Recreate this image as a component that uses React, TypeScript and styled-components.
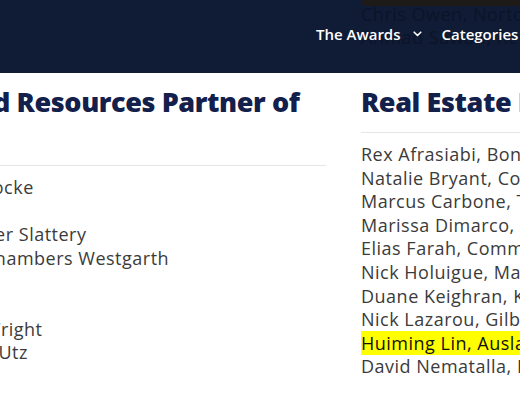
import styled, { createGlobalStyle } from 'styled-components'

const GlobalStyle = createGlobalStyle`
  html, body {
    margin: 0;
    padding: 0;
    background: #fff;
    overflow: hidden;
  }
  body {
    font-family: 'Open Sans', 'Noto Sans', sans-serif;
    width: 520px;
    height: 400px;
  }
`

const left = {
  title: 'Talent and Resources Partner of the Year',
  names: [
    'Emily Harris, Locke',
    'Jo Grant, Hays',
    'Anna Lins, Baker Slattery',
    'Emma Rudd, Chambers Westgarth',
    'Tim Ng, Aspect',
    'Lisa Tan, Hays',
    'Bobby Lowe, Wright',
    'Charlotte Hall, Utz',
    'Kim Ho, Apex',
  ],
}

const right = {
  title: 'Real Estate Lawyer of the Year',
  names: [
    'Rex Afrasiabi, Bond Lawyers',
    'Natalie Bryant, Corrs Chambers',
    'Marcus Carbone, Thomson Geer',
    'Marissa Dimarco, Maddocks',
    'Elias Farah, Commercial Law Group',
    'Nick Holuigue, Maddocks',
    'Duane Keighran, Keypoint Law',
    'Nick Lazarou, Gilbert + Tobin',
    'Huiming Lin, Auslaw Partners',
    'David Nematalla, Hall & Wilcox',
  ],
  highlight: 'Huiming Lin, Auslaw Partners',
}

const Chevron = () => (
  <svg width="9" height="6" viewBox="0 0 9 6" fill="none">
    <path d="M1.2 1.2 4.5 4.5 7.8 1.2" stroke="#fff" strokeWidth="1.6" strokeLinecap="round" strokeLinejoin="round" />
  </svg>
)

const App = () => {
  return (
    <>
      <GlobalStyle />
      <Header>
        <Ghost>
          <GhostBar />
          <GhostLine>Chris Owen, Norton Rose Fulbright</GhostLine>
          <GhostLine>Ahmad Sawan, Ready Lawyers</GhostLine>
        </Ghost>
        <Nav>
          <NavItem>
            The Awards
            <Chevron />
          </NavItem>
          <NavItem>
            Categories
            <Chevron />
          </NavItem>
          <NavItem>Judges</NavItem>
        </Nav>
      </Header>
      <Columns>
        {[left, right].map((col) => (
          <Column key={col.title}>
            <Title>{col.title}</Title>
            <Divider />
            <List>
              {col.names.map((n) =>
                'highlight' in col && col.highlight === n ? (
                  <Row key={n}>
                    <Mark>{n}</Mark>
                  </Row>
                ) : (
                  <Row key={n}>{n}</Row>
                )
              )}
            </List>
          </Column>
        ))}
      </Columns>
    </>
  )
}

export default App

const Header = styled.header`
  position: relative;
  height: 73px;
  background: #101b36;
  display: flex;
  align-items: center;
  padding-left: 316px;
  overflow: hidden;
`

const Ghost = styled.div`
  position: absolute;
  left: 361px;
  top: 0;
  width: 400px;
`

const GhostBar = styled.div`
  height: 6px;
  background: #1d1a17;
  border-bottom-left-radius: 6px;
  margin-bottom: -3px;
`

const GhostLine = styled.div`
  font-size: 18px;
  line-height: 23px;
  letter-spacing: 0.5px;
  color: #0b1428;
  white-space: nowrap;
`

const Nav = styled.nav`
  position: relative;
  display: flex;
  align-items: center;
  gap: 20px;
  margin-top: -5px;
`

const NavItem = styled.a`
  display: flex;
  align-items: center;
  gap: 12px;
  color: #fff;
  font-size: 15px;
  font-weight: 600;
  white-space: nowrap;
`

const Columns = styled.main`
  display: grid;
  grid-template-columns: 460px 460px;
  column-gap: 35px;
  margin-left: -134px;
  padding-top: 12px;
`

const Column = styled.section`
  min-width: 0;
`

const Title = styled.h2`
  margin: 0;
  font-size: 27px;
  line-height: 33px;
  font-weight: 800;
  color: #13204b;
  letter-spacing: -0.4px;
`

const Divider = styled.hr`
  border: none;
  border-top: 1px solid #e6e6e6;
  margin: 14px 0 10px;
`

const List = styled.div`
  font-size: 18px;
  line-height: 23.6px;
  letter-spacing: 0.5px;
  color: #3b3b3b;
`

const Row = styled.div`
  white-space: nowrap;
`

const Mark = styled.mark`
  background: #ffff00;
  color: #111;
  padding-right: 200px;
`
